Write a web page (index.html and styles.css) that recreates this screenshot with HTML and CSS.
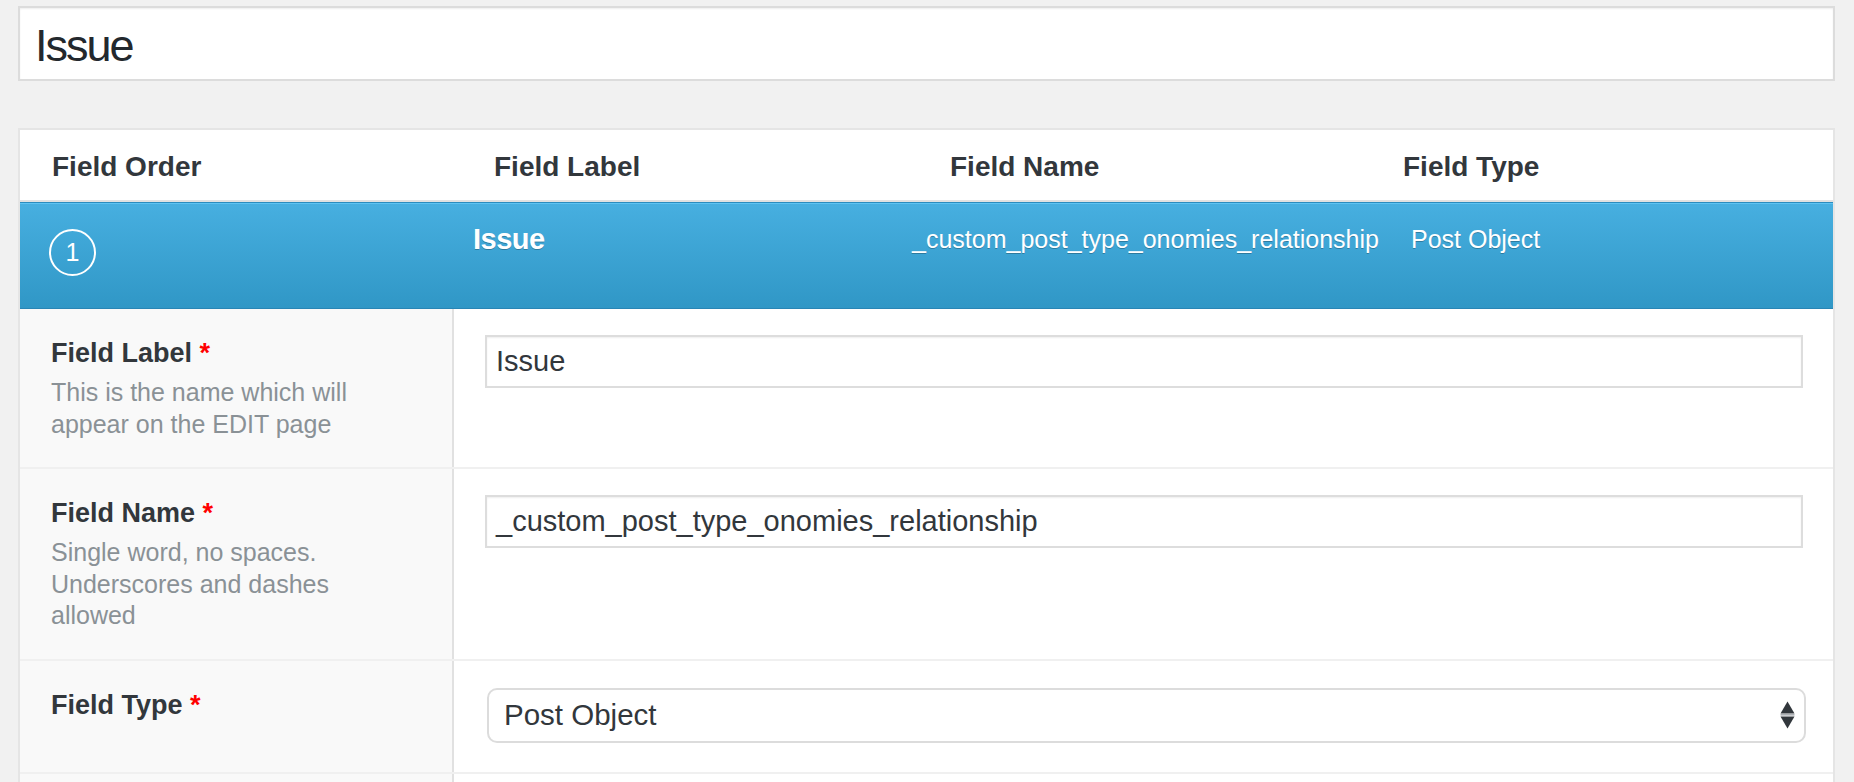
FILE: index.html
```html
<!DOCTYPE html>
<html lang="en">
<head>
<meta charset="utf-8">
<title>Edit Field</title>
<link rel="stylesheet" href="styles.css">
</head>
<body>
<div class="page">
  <div class="title-box">Issue</div>

  <div class="panel">
    <div class="head-row">
      <div>Field Order</div>
      <div>Field Label</div>
      <div>Field Name</div>
      <div>Field Type</div>
    </div>

    <div class="field-row">
      <div class="order"><span class="circle">1</span></div>
      <div class="f-label">Issue</div>
      <div class="f-name">_custom_post_type_onomies_relationship</div>
      <div class="f-type">Post Object</div>
    </div>

    <div class="settings">
      <div class="setting">
        <div class="s-label">
          <div class="lbl">Field Label <span class="req">*</span></div>
          <p class="desc">This is the name which will appear on the EDIT page</p>
        </div>
        <div class="s-input">
          <div class="text-input">Issue</div>
        </div>
      </div>

      <div class="setting">
        <div class="s-label">
          <div class="lbl">Field Name <span class="req">*</span></div>
          <p class="desc">Single word, no spaces. Underscores and dashes allowed</p>
        </div>
        <div class="s-input">
          <div class="text-input">_custom_post_type_onomies_relationship</div>
        </div>
      </div>

      <div class="setting">
        <div class="s-label">
          <div class="lbl">Field Type <span class="req">*</span></div>
        </div>
        <div class="s-input">
          <div class="select">
            <span>Post Object</span>
            <svg class="arrows" width="15" height="28" viewBox="0 0 15 28" aria-hidden="true">
              <polygon points="0.5,12.5 7.5,0.5 14.5,12.5" fill="#32373c"/>
              <rect x="0.5" y="13.2" width="14" height="1.3" fill="#9a9ea3"/>
              <polygon points="0.5,15.5 14.5,15.5 7.5,27.5" fill="#32373c"/>
            </svg>
          </div>
        </div>
      </div>

      <div class="setting setting-stub">
        <div class="s-label"></div>
        <div class="s-input"></div>
      </div>
    </div>
  </div>
</div>
</body>
</html>
```

FILE: styles.css
```css
html, body {
  margin: 0;
  background: #f1f1f1;
  font-family: "Liberation Sans", Arial, sans-serif;
  color: #32373c;
}

.page {
  padding: 6px 19px 0 18px;
}

.title-box {
  height: 75px;
  box-sizing: border-box;
  border: 2px solid #dcdcdc;
  background: #fff;
  box-shadow: inset 0 1px 2px rgba(0, 0, 0, 0.07);
  padding: 5px 15px 0;
  font-size: 45px;
  line-height: 66px;
  letter-spacing: -2px;
  color: #23282d;
}

.panel {
  margin-top: 47px;
  border: 2px solid #e5e5e5;
  border-bottom: 0;
  background: #fff;
}

.head-row {
  display: grid;
  grid-template-columns: 442px 456px 453px 1fr;
  padding: 21px 0 17px 32px;
  font-weight: bold;
  font-size: 28px;
  line-height: 32px;
  color: #32373c;
  border-bottom: 2px solid #e1e1e1;
}

.field-row {
  display: grid;
  grid-template-columns: 424px 439px 499px 1fr;
  align-items: start;
  height: 107px;
  box-sizing: border-box;
  padding: 20px 0 0 29px;
  border-top: 1px solid #2b8cbf;
  border-bottom: 1px solid #2985b5;
  background: linear-gradient(#47afe0, #3097c6);
  box-shadow: inset 0 1px 0 #5ec3f2;
  color: #fff;
  text-shadow: 0 1px 0 rgba(0, 0, 0, 0.25);
}

.circle {
  display: flex;
  width: 47px;
  height: 47px;
  box-sizing: border-box;
  margin-top: 6px;
  border: 2px solid #fff;
  border-radius: 50%;
  align-items: center;
  justify-content: center;
  font-size: 25px;
  text-shadow: none;
}

.f-label {
  font-weight: bold;
  font-size: 29px;
  line-height: 32px;
  letter-spacing: -0.5px;
}

.f-name,
.f-type {
  font-size: 25px;
  line-height: 32px;
}

.setting {
  display: grid;
  grid-template-columns: 434px 1fr;
  border-top: 2px solid #f0f0f0;
}

.setting:first-child {
  border-top: 0;
}

.setting-stub {
  min-height: 80px;
}

.s-label {
  box-sizing: border-box;
  background: #f9f9f9;
  border-right: 2px solid #e1e1e1;
  padding: 26px 20px 27px 31px;
}

.s-input {
  padding: 26px 30px 27px 31px;
}

.lbl {
  font-weight: bold;
  font-size: 27px;
  line-height: 36px;
  color: #32373c;
}

.req {
  color: #f00;
}

.desc {
  margin: 6px 0 0;
  max-width: 330px;
  font-size: 25px;
  line-height: 31.5px;
  color: #8a9196;
}

.text-input {
  height: 53px;
  box-sizing: border-box;
  border: 2px solid #ddd;
  background: #fff;
  box-shadow: inset 0 1px 2px rgba(0, 0, 0, 0.07);
  padding: 0 9px;
  font-size: 29px;
  line-height: 49px;
  color: #32373c;
  white-space: nowrap;
}

.select {
  display: flex;
  align-items: center;
  justify-content: space-between;
  height: 55px;
  box-sizing: border-box;
  margin: 1px -3px 2px 2px;
  padding: 0 9px 0 15px;
  border: 2px solid #dcdcdc;
  border-radius: 10px;
  background: #fff;
  font-size: 29.5px;
  color: #32373c;
}

.arrows {
  display: block;
}
```
